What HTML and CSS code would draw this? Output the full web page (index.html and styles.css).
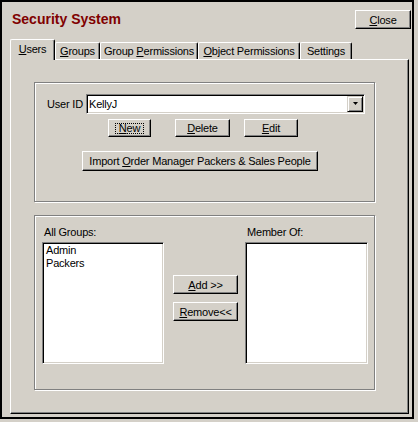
FILE: index.html
```html
<!DOCTYPE html>
<html lang="en">
<head>
  <meta charset="UTF-8" />
  <title>Security System</title>
  <link rel="stylesheet" href="styles.css">
</head>
<body>
  <div class="form">
    <!-- Title bar of the form -->
    <div class="header">
      <h1 class="title">Security System</h1>
      <button class="btn btn-close"><u>C</u>lose</button>
    </div>

    <!-- Tab strip -->
    <div class="tabs">
      <div class="tab tab-users active"><u>U</u>sers</div>
      <div class="tab tab-groups"><u>G</u>roups</div>
      <div class="tab tab-perms">Group <u>P</u>ermissions</div>
      <div class="tab tab-objects"><u>O</u>bject Permissions</div>
      <div class="tab tab-settings">Settings</div>
    </div>

    <div class="panel">
      <!-- User selection -->
      <div class="frame frame-user">
        <div class="user-row">
          <label class="user-label">User ID</label>
          <div class="combo">
            <span class="combo-text">KellyJ</span>
            <span class="combo-btn">
              <svg width="7" height="4" viewBox="0 0 7 4"><path d="M1 0h5L3.5 3z" fill="#000"/></svg>
            </span>
          </div>
        </div>
        <div class="action-row">
          <button class="btn btn-new"><span class="focus"><u>N</u>ew</span></button>
          <button class="btn btn-delete"><u>D</u>elete</button>
          <button class="btn btn-edit"><u>E</u>dit</button>
        </div>
        <div class="import-row">
          <button class="btn btn-import">Import <u>O</u>rder Manager Packers &amp; Sales People</button>
        </div>
      </div>

      <!-- Group membership -->
      <div class="frame frame-groups">
        <div class="col col-all">
          <div class="list-label">All Groups:</div>
          <ul class="list">
            <li>Admin</li>
            <li>Packers</li>
          </ul>
        </div>
        <div class="col col-move">
          <button class="btn btn-move"><u>A</u>dd &gt;&gt;</button>
          <button class="btn btn-move btn-remove"><u>R</u>emove&lt;&lt;</button>
        </div>
        <div class="col col-member">
          <div class="list-label">Member Of:</div>
          <ul class="list"></ul>
        </div>
      </div>
    </div>
  </div>
</body>
</html>
```

FILE: styles.css
```css
/* Classic dialog look */
* {
  box-sizing: border-box;
}

body {
  margin: 0;
  background: #d4d0c8;
  font-family: "Liberation Sans", Arial, sans-serif;
  font-size: 11px;
  letter-spacing: -0.2px;
  color: #000;
}

.form {
  width: 414px;
  height: 419px;
  border: 2px solid #000;
  padding: 8px 3px 3px 8px;
  display: flex;
  flex-direction: column;
}

.header {
  display: flex;
  justify-content: space-between;
  align-items: flex-start;
  height: 19px;
  margin: 0 -2px 10px 2px;
}

.title {
  margin: 0;
  font-size: 14px;
  line-height: 19px;
  font-weight: bold;
  letter-spacing: 0;
  color: #800000;
}

/* Raised 3D button */
.btn {
  font: inherit;
  letter-spacing: inherit;
  color: #000;
  background: #d4d0c8;
  border: 1px solid;
  border-color: #fff #000 #000 #fff;
  box-shadow: inset -1px -1px #808080;
  padding: 0;
  height: 18px;
}

.btn-close {
  width: 56px;
  height: 19px;
}

/* Tabs */
.tabs {
  display: flex;
  align-items: flex-end;
  height: 20px;
  position: relative;
  z-index: 1;
}

.tab {
  height: 17px;
  padding-top: 2px;
  line-height: 13px;
  text-align: center;
  border: 1px solid #fff;
  border-bottom: 0;
  border-right-color: #000;
  border-radius: 2px 2px 0 0;
  box-shadow: inset -1px 0 #808080;
  background: #d4d0c8;
}

.tab.active {
  height: 21px;
  padding-top: 3px;
  margin-bottom: -1px;
}

.tab-users { width: 45px; }
.tab-groups { width: 45px; }
.tab-perms { width: 98px; }
.tab-objects { width: 102px; }
.tab-settings { width: 52px; }

.panel {
  flex: 1;
  border: 1px solid;
  border-color: #fff #000 #000 #fff;
  box-shadow: inset -1px -1px #808080;
  padding: 22px 0 0 23px;
}

/* Etched group frame */
.frame {
  width: 341px;
  border: 1px solid #808080;
  box-shadow: inset 1px 1px #fff, 1px 1px #fff;
}

.frame-user {
  height: 120px;
}

.user-row {
  display: flex;
  align-items: center;
  margin: 11px 0 0 12px;
}

.user-label {
  width: 39px;
}

/* Sunken field */
.combo,
.list {
  border: 1px solid;
  border-color: #808080 #fff #fff #808080;
  box-shadow: inset 1px 1px #000, inset -1px -1px #d4d0c8;
  background: #fff;
}

.combo {
  width: 279px;
  height: 20px;
  padding: 1px;
  display: flex;
  align-items: center;
}

.combo-text {
  flex: 1;
  padding-left: 1px;
}

.combo-btn {
  width: 16px;
  height: 16px;
  display: flex;
  align-items: center;
  justify-content: center;
  background: #d4d0c8;
  border: 1px solid;
  border-color: #d4d0c8 #000 #000 #d4d0c8;
  box-shadow: inset 1px 1px #fff, inset -1px -1px #808080;
}

.action-row {
  display: flex;
  margin: 5px 0 0 73px;
}

.btn-new { width: 43px; }
.btn-delete { width: 55px; margin-left: 24px; }
.btn-edit { width: 54px; margin-left: 14px; }

.focus {
  display: inline-block;
  border: 1px dotted #000;
  padding: 0 3px;
  line-height: 9px;
}

.import-row {
  margin: 14px 0 0 47px;
}

.btn-import {
  width: 236px;
  height: 20px;
}

/* Group lists */
.frame-groups {
  display: flex;
  height: 175px;
  margin-top: 13px;
  padding: 9px 0 0 7px;
}

.col-all { width: 122px; }
.col-member { width: 123px; margin-left: 7px; }

.col-move {
  width: 65px;
  margin-left: 9px;
  padding-top: 50px;
  display: flex;
  flex-direction: column;
}

.list-label {
  line-height: 14px;
  padding-left: 2px;
}

.list {
  height: 122px;
  margin: 3px 0 0;
  padding: 1px 0 0 3px;
  list-style: none;
  line-height: 13px;
}

.btn-move {
  height: 19px;
}

.btn-remove {
  margin-top: 8px;
}
```
